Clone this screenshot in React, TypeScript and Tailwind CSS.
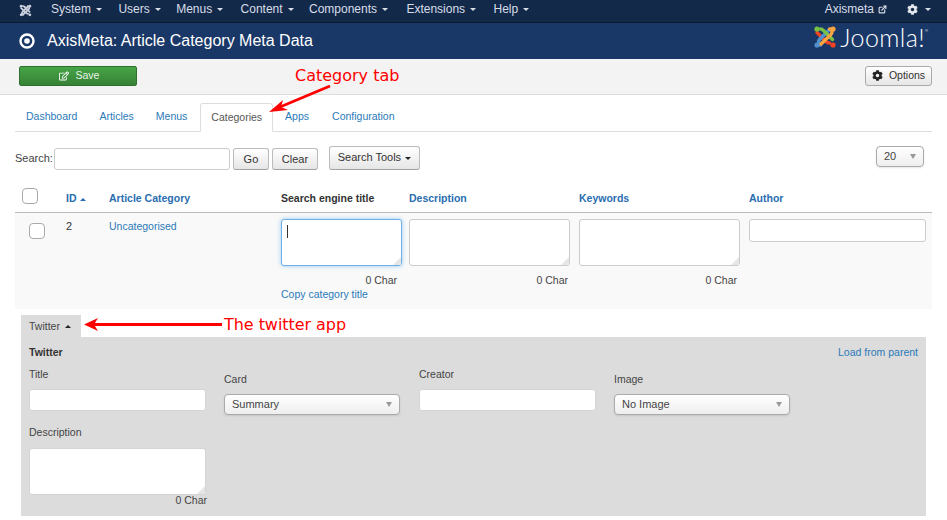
import { FaCog, FaRegEdit } from "react-icons/fa";
import { FiExternalLink } from "react-icons/fi";

// menu labels with the gap that follows each one
const menus = [
    { label: "System", className: "pr-[16.4px]" },
    { label: "Users", className: "pr-[15.4px]" },
    { label: "Menus", className: "pr-[17.4px]" },
    { label: "Content", className: "pr-[15.4px]" },
    { label: "Components", className: "pr-[18.4px]" },
    { label: "Extensions", className: "pr-[17.4px]" },
    { label: "Help", className: "pr-[16.4px]" },
];

function Caret({ className = "" }: { className?: string }) {
    return <span className={`inline-block w-0 h-0 border-x-[3px] border-x-transparent border-t-[3px] ${className}`} />;
}

function JoomlaMark({ size, colors }: { size: number; colors: string[] }) {
    // four interlocked arms, one colour each
    return (
        <svg width={size} height={size} viewBox="0 0 24 24" fill="none" strokeWidth="3.4" strokeLinecap="round">
            <path d="M4 7.5 L13 16.5 Q14.5 18 16.5 18" stroke={colors[2]} />
            <circle cx="20" cy="20" r="2.6" fill={colors[2]} />
            <path d="M7.5 20 Q5.5 20 5.5 17 Q5.5 15.5 7 14 L16.5 4.5" stroke={colors[3]} />
            <circle cx="4" cy="20" r="2.6" fill={colors[3]} />
            <path d="M7.5 4 Q9 4 10.5 5.5 L19.5 14.5" stroke={colors[0]} />
            <circle cx="4" cy="4" r="2.6" fill={colors[0]} />
            <path d="M16.5 4 Q19 4 19 7 Q19 8.5 17.5 10 L8 19" stroke={colors[1]} />
            <circle cx="20" cy="4" r="2.6" fill={colors[1]} />
        </svg>
    );
}

function Select({ label, width }: { label: string; width: string }) {
    return (
        <div className={`${width} h-[21px] flex items-center justify-between pl-[7px] pr-[7px] rounded-[4px] border border-[#aaaaaa] bg-gradient-to-b from-white to-[#eeeeee] text-[11px] text-[#444444] shadow-[0_1px_2px_rgba(0,0,0,0.1)]`}>
            <span>{label}</span>
            <Caret className="border-t-[#999999] border-x-[3.5px] border-t-[5px]" />
        </div>
    );
}

function Button({ children, className = "" }: { children: React.ReactNode; className?: string }) {
    return (
        <div className={`h-[22px] flex items-center justify-center rounded-[3px] border border-[#bbbbbb] border-b-[#a2a2a2] bg-gradient-to-b from-white to-[#e6e6e6] text-[11px] text-[#333333] ${className}`}>
            {children}
        </div>
    );
}

// textarea with the faint corner grip of the original theme
function Area({ className, border }: { className: string; border: string }) {
    return (
        <div className={`relative ${className}`}>
            <textarea readOnly className={`block w-full h-full resize-none rounded-[3px] border bg-white ${border}`} />
            <span className="absolute right-px bottom-px w-0 h-0 border-l-[8px] border-l-transparent border-b-[8px] border-b-[#e6e6e6]" />
        </div>
    );
}

const fieldClass = "block rounded-[3px] border border-[#cccccc] bg-white";
const flatField = "block rounded-[3px] border border-[#d4d4d4] bg-white";

export default function App() {
    return (
        <div className="relative w-[947px] h-[520px] overflow-hidden bg-white font-['Liberation_Sans',Arial,sans-serif] text-[#333333]">
            {/* top menu */}
            <div className="h-[23px] pb-[4px] bg-[#13294a] border-b border-[#0c1a30] flex items-center text-[12px] text-[#d8dee8]">
                <div className="w-[51px] pl-[19px] shrink-0 pt-[2px]">
                    <JoomlaMark size={13} colors={["#c9d0dc", "#c9d0dc", "#c9d0dc", "#c9d0dc"]} />
                </div>
                <div className="flex">
                    {menus.map((m) => (
                        <div key={m.label} className={`flex items-center gap-[5px] ${m.className}`}>
                            <span>{m.label}</span>
                            <Caret className="border-t-[#d8dee8] mt-[1px]" />
                        </div>
                    ))}
                </div>
                <div className="ml-auto flex items-center pr-[16px]">
                    <span>Axismeta</span>
                    <FiExternalLink strokeWidth={3} className="ml-[4px] mr-[20px] text-[9px]" />
                    <FaCog className="mr-[7px] text-[11px] text-[#e4e8ee]" />
                    <Caret className="border-t-[#d8dee8] mt-[1px]" />
                </div>
            </div>

            {/* title bar */}
            <div className="h-[36px] bg-[#1a3867] flex items-center pl-[19px] pr-[19px] text-white">
                <svg width="16" height="16" viewBox="0 0 16 16" className="shrink-0">
                    <circle cx="8" cy="8" r="6.5" fill="none" stroke="white" strokeWidth="2.4" />
                    <circle cx="8" cy="8" r="2.8" fill="white" />
                </svg>
                <h1 className="ml-[12px] text-[16px] leading-none">AxisMeta: Article Category Meta Data</h1>
                <div className="ml-auto flex items-center gap-[3px] -mt-[8px]">
                    <JoomlaMark size={24} colors={["#7ac143", "#f9a541", "#f44321", "#5091cd"]} />
                    <span className="font-['Lato',sans-serif] font-light text-[25px] leading-none tracking-[0.4px]">Joomla!</span>
                    <span className="self-start mt-[4px] -ml-[3px] text-[4px] leading-none">®</span>
                </div>
            </div>

            {/* toolbar */}
            <div className="h-[36px] pb-[2px] bg-[#f3f3f3] border-b border-[#dddddd] flex items-center justify-between pl-[19px] pr-[15px]">
                <div className="w-[118px] h-[20px] flex items-center justify-center gap-[7px] pl-[2px] rounded-[2px] border border-[#2f6f2f] bg-gradient-to-b from-[#46a546] to-[#378137] text-[10.5px] text-[#e8f3e8]">
                    <FaRegEdit className="text-[10px] text-white" />
                    <span>Save</span>
                </div>
                <Button className="w-[67px] !h-[20px] gap-[6px] !text-[10.5px] !border-[#aaaaaa]">
                    <FaCog className="text-[11px] text-[#222222]" />
                    <span>Options</span>
                </Button>
            </div>

            <div className="pl-[15px] pr-[15px]">
                {/* tabs */}
                <div className="mt-[8px] h-[29px] flex border-b border-[#dddddd] text-[10.5px] text-[#2a7ab8]">
                    <div className="h-[28px] px-[11px] flex items-center">Dashboard</div>
                    <div className="h-[28px] px-[11px] flex items-center">Articles</div>
                    <div className="h-[28px] pl-[11px] pr-[13px] flex items-center">Menus</div>
                    <div className="h-[29px] px-[10px] flex items-center bg-white border border-[#dddddd] border-b-white rounded-t-[3px] text-[#555555]">
                        Categories
                    </div>
                    <div className="h-[28px] pl-[12px] pr-[11px] flex items-center">Apps</div>
                    <div className="h-[28px] pl-[12px] pr-[11px] flex items-center">Configuration</div>
                </div>

                {/* search */}
                <div className="mt-[14px] h-[24px] flex items-end text-[11px]">
                    <span className="mr-[1px] mb-[4px] text-[#444444]">Search:</span>
                    <div className={`${fieldClass} w-[176px] h-[22px]`} />
                    <Button className="ml-[3px] w-[36px]">Go</Button>
                    <Button className="ml-[3px] w-[46px]">Clear</Button>
                    <Button className="ml-[11px] w-[91px] !h-[24px] gap-[4px]">
                        <span className="-mt-[1px]">Search Tools</span>
                        <Caret className="border-t-[#222222]" />
                    </Button>
                    <div className="ml-auto mr-[8px] mb-[3px]">
                        <Select label="20" width="w-[48px]" />
                    </div>
                </div>

                {/* table head */}
                <div className="mt-[12px] h-[31px] pt-[4px] grid grid-cols-[51px_43px_172px_128px_170px_170px_183px] items-center border-b border-[#bbbbbb] text-[10.5px] font-bold text-[#2a6db0]">
                    <div className="pl-[7px] -mt-[6px]">
                        <div className="w-[16px] h-[16px] rounded-[4px] border border-[#aaaaaa] bg-white" />
                    </div>
                    <div className="flex items-center gap-[3px]">
                        ID
                        <span className="w-0 h-0 border-x-[3px] border-x-transparent border-b-[3px] border-b-[#2a6db0]" />
                    </div>
                    <div>Article Category</div>
                    <div className="text-[#333333]">Search engine title</div>
                    <div>Description</div>
                    <div>Keywords</div>
                    <div>Author</div>
                </div>

                {/* row */}
                <div className="h-[96px] pt-[6px] grid grid-cols-[51px_43px_172px_128px_170px_170px_183px] bg-[#f9f9f9] text-[10.5px]">
                    <div className="pl-[14px] pt-[4px]">
                        <div className="w-[16px] h-[16px] rounded-[4px] border border-[#aaaaaa] bg-white" />
                    </div>
                    <div className="text-[11px] leading-[15px]">2</div>
                    <div className="text-[#2a7ab8] leading-[15px]">Uncategorised</div>
                    <div>
                        <div className="relative w-[121px] h-[47px]">
                            <Area className="w-[121px] h-[47px]" border="border-[#6fb1e6] shadow-[0_0_4px_rgba(82,168,236,0.6)]" />
                            <span className="absolute left-[6px] top-[6px] w-px h-[13px] bg-[#333333]" />
                        </div>
                        <div className="w-[116px] mt-[8px] text-right leading-[13px] text-[#444444]">0 Char</div>
                        <div className="mt-[1px] text-[#2a7ab8] leading-[13px]">Copy category title</div>
                    </div>
                    <div>
                        <Area className="w-[161px] h-[47px]" border="border-[#cccccc]" />
                        <div className="w-[159px] mt-[8px] text-right leading-[13px] text-[#444444]">0 Char</div>
                    </div>
                    <div>
                        <Area className="w-[161px] h-[47px]" border="border-[#cccccc]" />
                        <div className="w-[158px] mt-[8px] text-right leading-[13px] text-[#444444]">0 Char</div>
                    </div>
                    <div>
                        <div className={`${fieldClass} w-[177px] h-[23px]`} />
                    </div>
                </div>

                {/* twitter app */}
                <div className="ml-[6px] mt-[6px] w-[60px] h-[22px] pt-[1px] bg-[#dcdcdc] flex items-center gap-[5px] pl-[8px] text-[10.5px] text-[#444444]">
                    Twitter
                    <span className="w-0 h-0 border-x-[3px] border-x-transparent border-b-[3px] border-b-[#222222]" />
                </div>
                <div className="ml-[6px] w-[905px] h-[179px] bg-[#dcdcdc] px-[8px] text-[10.5px] text-[#444444]">
                    <div className="pt-[9px] flex justify-between leading-[13px]">
                        <span className="font-bold text-[#333333]">Twitter</span>
                        <span className="text-[#2a7ab8]">Load from parent</span>
                    </div>
                    <div className="mt-[9px] grid grid-cols-[195px_195px_195px_195px]">
                        <div>
                            <div className="leading-[13px]">Title</div>
                            <div className={`${flatField} mt-[8px] w-[177px] h-[22px]`} />
                            <div className="mt-[15px] leading-[13px]">Description</div>
                            <Area className="mt-[9px] w-[177px] h-[47px]" border="border-[#d4d4d4]" />
                            <div className="w-[178px] -mt-px text-right leading-[13px]">0 Char</div>
                        </div>
                        <div className="pt-[5px]">
                            <div className="leading-[13px]">Card</div>
                            <div className="mt-[8px]"><Select label="Summary" width="w-[176px]" /></div>
                        </div>
                        <div>
                            <div className="leading-[13px]">Creator</div>
                            <div className={`${flatField} mt-[8px] w-[177px] h-[22px]`} />
                        </div>
                        <div className="pt-[5px]">
                            <div className="leading-[13px]">Image</div>
                            <div className="mt-[8px]"><Select label="No Image" width="w-[176px]" /></div>
                        </div>
                    </div>
                </div>
            </div>

            {/* red annotations drawn on top of the screenshot */}
            <span className="absolute left-[295px] top-[66px] font-['DejaVu_Sans',sans-serif] text-[16px] leading-[20px] text-[#ff0000]">Category tab</span>
            <span className="absolute left-[224px] top-[315px] font-['DejaVu_Sans',sans-serif] text-[16px] leading-[20px] tracking-[-0.05px] text-[#ff0000]">The twitter app</span>
            <svg className="absolute left-0 top-0 pointer-events-none" width="947" height="520">
                <line x1="330" y1="86" x2="280" y2="107" stroke="#ff0000" strokeWidth="2.8" />
                <path d="M269 112 L283 100 L281 107 L288 110 Z" fill="#ff0000" />
                <line x1="222" y1="324.5" x2="94" y2="324.5" stroke="#ff0000" strokeWidth="2.8" />
                <path d="M84 324.5 L98 318 L94 324.5 L98 331 Z" fill="#ff0000" />
            </svg>
        </div>
    );
}
